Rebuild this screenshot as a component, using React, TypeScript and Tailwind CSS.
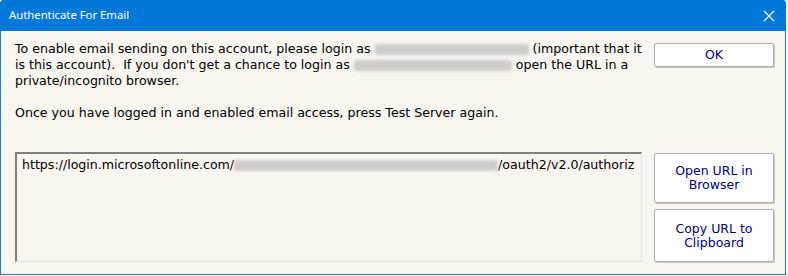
import React from "react";

const body = { fontFamily: '"DejaVu Sans", Verdana, sans-serif' } as React.CSSProperties;

function Blur({ w }: { w: number }) {
  return (
    <span
      className="inline-block align-middle h-[11px] rounded-[3px] bg-[#cfcccd] blur-[1.5px]"
      style={{ width: w }}
    />
  );
}

function Btn({ children, className }: { children: React.ReactNode; className?: string }) {
  return (
    <button
      className={
        "w-[120px] bg-white border border-[#adadad] rounded-[2px] shadow-[1px_1px_0_#c8c8c8] text-[#000080] text-[12.5px] leading-[14px] flex items-center justify-center text-center " +
        (className ?? "")
      }
      style={body}
    >
      {children}
    </button>
  );
}

export default function App() {
  return (
    <div className="w-[788px] h-[276px] bg-white">
      <div className="w-[786px] h-[275px] bg-[#1a7fd6] rounded-t-[4px] flex flex-col px-px pb-px">
        <div className="h-[31px] bg-[#0078d7] rounded-t-[4px] -mx-px flex items-center justify-between pl-[9px] pr-[10px]">
          <span
            className="text-white text-[11.3px]"
            style={{ fontFamily: '"Noto Sans", "Open Sans", sans-serif' }}
          >
            Authenticate For Email
          </span>
          <svg width="12" height="12" viewBox="0 0 12 12" className="mr-[1px]">
            <path d="M1 1 L11 11 M11 1 L1 11" stroke="white" strokeWidth="1.1" />
          </svg>
        </div>
        <div className="flex-1 bg-[#f9f5f0] flex flex-col pl-[14px] pr-[11px] pt-[10px] pb-[12px]">
          <div className="flex justify-between">
            <div className="text-[12.6px] leading-[16px] text-black whitespace-nowrap" style={body}>
              <div>
                To enable email sending on this account, please login as <Blur w={154} /> (important that it
              </div>
              <div>
                is this account).&nbsp; If you don't get a chance to login as <Blur w={158} /> open the URL in a
              </div>
              <div>private/incognito browser.</div>
              <div className="h-[16px]" />
              <div>Once you have logged in and enabled email access, press Test Server again.</div>
            </div>
            <Btn className="h-[24px] mt-[2px]">OK</Btn>
          </div>
          <div className="flex-1" />
          <div className="flex justify-between items-end">
            <div className="w-[627px] h-[110px] border-t-2 border-l-2 border-t-[#808080] border-l-[#808080] border-b border-r border-b-[#e3e3e3] border-r-[#e3e3e3] pl-[5px] pt-[3px] text-[12.6px] leading-[16px] text-black whitespace-nowrap overflow-hidden" style={body}>
              https://login.microsoftonline.com/<Blur w={264} />/oauth2/v2.0/authoriz
            </div>
            <div className="flex flex-col gap-[6px]">
              <Btn className="h-[50px]">
                Open URL in
                <br />
                Browser
              </Btn>
              <Btn className="h-[53px]">
                Copy URL to
                <br />
                Clipboard
              </Btn>
            </div>
          </div>
        </div>
      </div>
    </div>
  );
}
